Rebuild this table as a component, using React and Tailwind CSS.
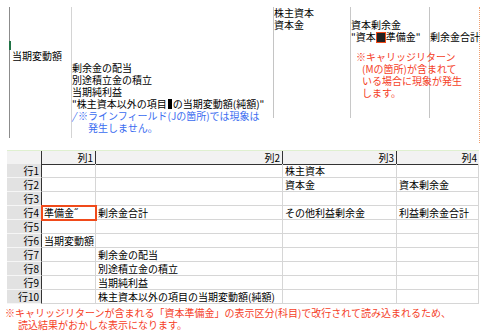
import React from "react";

const rows = [
  { h: "行1", c: ["", "", "株主資本", ""] },
  { h: "行2", c: ["", "", "資本金", "資本剰余金"] },
  { h: "行3", c: ["", "", "", ""] },
  { h: "行4", c: ["準備金\u02DD", "剰余金合計", "その他利益剰余金", "利益剰余金合計"], sel: true },
  { h: "行5", c: ["", "", "", ""] },
  { h: "行6", c: ["当期変動額", "", "", ""] },
  { h: "行7", c: ["", "剰余金の配当", "", ""] },
  { h: "行8", c: ["", "別途積立金の積立", "", ""] },
  { h: "行9", c: ["", "当期純利益", "", ""] },
  { h: "行10", c: ["", "株主資本以外の項目の当期変動額(純額)", "", ""] },
];

export default function App() {
  return (
    <div
      className="w-[481px] h-[336px] bg-white overflow-hidden text-[10px] leading-[12px] text-black"
      style={{ fontFamily: '"Noto Sans CJK JP", "Noto Sans", sans-serif' }}
    >
      {/* top sheet area */}
      <div className="flex pt-[7px] pl-[9px] h-[143px]">
        <div className="w-[62px] h-[131px] border-l border-[#8c8c8c] flex flex-col">
          <div className="-ml-px w-[2px] h-[9px] bg-[#217346] mt-[34px]" />
          <div className="pl-[2px] whitespace-nowrap">当期変動額</div>
        </div>
        <div className="w-[202px] h-[131px] border-l border-[#d4d4d4] pt-[55px] whitespace-nowrap">
          <div>剰余金の配当</div>
          <div>別途積立金の積立</div>
          <div>当期純利益</div>
          <div className="flex items-center">
            <span>"株主資本以外の項目</span>
            <span className="inline-block w-[4px] h-[10px] bg-black mx-[1px]" />
            <span>の当期変動額(純額)"</span>
          </div>
          <div className="text-[#3a6cf0] flex">
            <span className="italic w-[6px]">/</span>
            <span>※ラインフィールド(Jの箇所)では現象は</span>
          </div>
          <div className="text-[#3a6cf0] pl-[16px]">発生しません。</div>
        </div>
        <div className="w-[77px] h-[111px] border-l border-[#c4c4c4] whitespace-nowrap">
          <div>株主資本</div>
          <div>資本金</div>
        </div>
        <div className="w-[79px] h-[111px] border-l border-[#c8c8c8] pt-[12px] whitespace-nowrap relative z-10">
          <div>資本剰余金</div>
          <div className="flex items-center">
            <span>"資本</span>
            <span className="inline-block w-[10px] h-[11px] bg-[#222] border border-[#f04a1a]" />
            <span>準備金"</span>
          </div>
          <div className="text-[#f5401f] mt-[8px] pl-[5px]">
            <div>※キャリッジリターン</div>
            <div className="pl-[6px]">(Mの箇所)が含まれて</div>
            <div className="pl-[6px]">いる場合に現象が発生</div>
            <div className="pl-[6px]">します。</div>
          </div>
        </div>
        <div className="w-[51px] h-[136px] border-r border-dotted border-[#f0a070]">
          <div className="h-[111px] border-l border-[#c4c4c4] pt-[24px] whitespace-nowrap">
            剰余金合計
          </div>
        </div>
      </div>

      {/* table */}
      <div className="ml-[7px] mt-[7px] w-[472px]">
        <div className="grid grid-cols-[35px_54px_187px_114px_82px] h-[14px] bg-[#f2f2f2] border-t border-[#dff0d0] leading-[13px]">
          <div className="border-r border-b border-[#333]" />
          <div className="border-r border-b border-[#333] text-right pr-[2px]">列1</div>
          <div className="border-r border-b border-[#333] text-right pr-[2px]">列2</div>
          <div className="border-r border-b border-[#333] text-right pr-[2px]">列3</div>
          <div className="border-b border-[#333] text-right pr-[2px]">列4</div>
        </div>
        {rows.map((r) => (
          <div
            key={r.h}
            className="grid grid-cols-[35px_54px_187px_114px_82px] h-[14px] leading-[13px]"
          >
            <div className="bg-[#e2e2e2] border-b border-[#f6f6f6] border-r border-r-[#333] text-right pr-[2px]">
              {r.h}
            </div>
            {r.c.map((t, i) => (
              <div
                key={i}
                className={
                  "border-b border-r border-[#d6d6d6] pl-[2px] whitespace-nowrap overflow-visible " +
                  (r.sel && i === 0
                    ? "relative z-10 outline-2 outline-[#f04a1a] -outline-offset-1"
                    : "")
                }
              >
                {t}
              </div>
            ))}
          </div>
        ))}
      </div>

      {/* note */}
      <div className="text-[#f5401f] mt-[3px] pl-[5px] whitespace-nowrap">
        <div>※キャリッジリターンが含まれる「資本準備金」の表示区分(科目)で改行されて読み込まれるため、</div>
        <div className="pl-[13px]">読込結果がおかしな表示になります。</div>
      </div>
    </div>
  );
}
